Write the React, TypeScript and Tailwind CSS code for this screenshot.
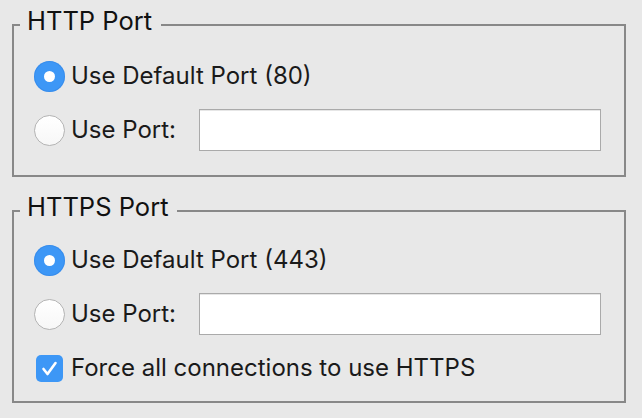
import React from "react";

function Radio({ checked }: { checked: boolean }) {
  return checked ? (
    <span className="w-[31px] h-[31px] rounded-full bg-[#3d97f6] flex items-center justify-center shrink-0 shadow-[inset_0_0_0_1px_rgba(40,120,220,0.35)]">
      <span className="w-[11px] h-[11px] rounded-full bg-white" />
    </span>
  ) : (
    <span className="w-[31px] h-[31px] rounded-full bg-gradient-to-b from-white to-[#f7f7f7] border border-[#b4b4b4] shrink-0" />
  );
}

function Checkbox() {
  return (
    <span className="w-[27px] h-[27px] rounded-[5px] bg-[#3d97f6] flex items-center justify-center shrink-0">
      <svg width="27" height="27" viewBox="0 0 27 27">
        <path d="M7.5 14 L11.5 19 L19.5 8" fill="none" stroke="white" strokeWidth="2.6" strokeLinecap="round" strokeLinejoin="round" />
      </svg>
    </span>
  );
}

function RadioRow({ checked, label }: { checked: boolean; label: string }) {
  return (
    <div className="flex items-center h-[42px]">
      <Radio checked={checked} />
      <span className="ml-[6px] text-[24px] leading-[30px]">{label}</span>
    </div>
  );
}

function PortRow() {
  return (
    <div className="flex items-center h-[42px]">
      <div className="flex items-center w-[165px]">
        <Radio checked={false} />
        <span className="ml-[6px] text-[24px] leading-[30px]">Use Port:</span>
      </div>
      <input
        type="text"
        className="w-[402px] h-[42px] bg-white border border-[#aaaaaa] shadow-[inset_0_1px_0_#e6e6e6] outline-none"
      />
    </div>
  );
}

function Legend({ children }: { children: React.ReactNode }) {
  return (
    <legend className="ml-[6px] pl-[7px] pr-[9px] pb-[8px] text-[25.5px] leading-[30px] text-[#111]">
      {children}
    </legend>
  );
}

export default function App() {
  return (
    <div className="w-[642px] h-[418px] bg-[#e8e8e8] pl-[12px] pt-[6px] overflow-hidden text-[#1a1a1a] font-['Inter','Liberation_Sans',Arial,sans-serif]">
      <fieldset className="w-[614px] m-0 p-0 border-2 border-[#888888]">
        <Legend>HTTP Port</Legend>
        <div className="pt-[11px] pb-[24px] pl-[20px] pr-[23px] flex flex-col gap-[12px]">
          <RadioRow checked={true} label="Use Default Port (80)" />
          <PortRow />
        </div>
      </fieldset>
      <fieldset className="w-[614px] mt-[15px] p-0 border-2 border-[#888888]">
        <Legend>HTTPS Port</Legend>
        <div className="pt-[9px] pb-[19px] pl-[20px] pr-[23px] flex flex-col gap-[12px]">
          <RadioRow checked={true} label="Use Default Port (443)" />
          <PortRow />
          <div className="flex items-center h-[28px] mt-[7px] pl-[2px]">
            <Checkbox />
            <span className="ml-[8px] text-[24px] leading-[30px]">Force all connections to use HTTPS</span>
          </div>
        </div>
      </fieldset>
    </div>
  );
}
